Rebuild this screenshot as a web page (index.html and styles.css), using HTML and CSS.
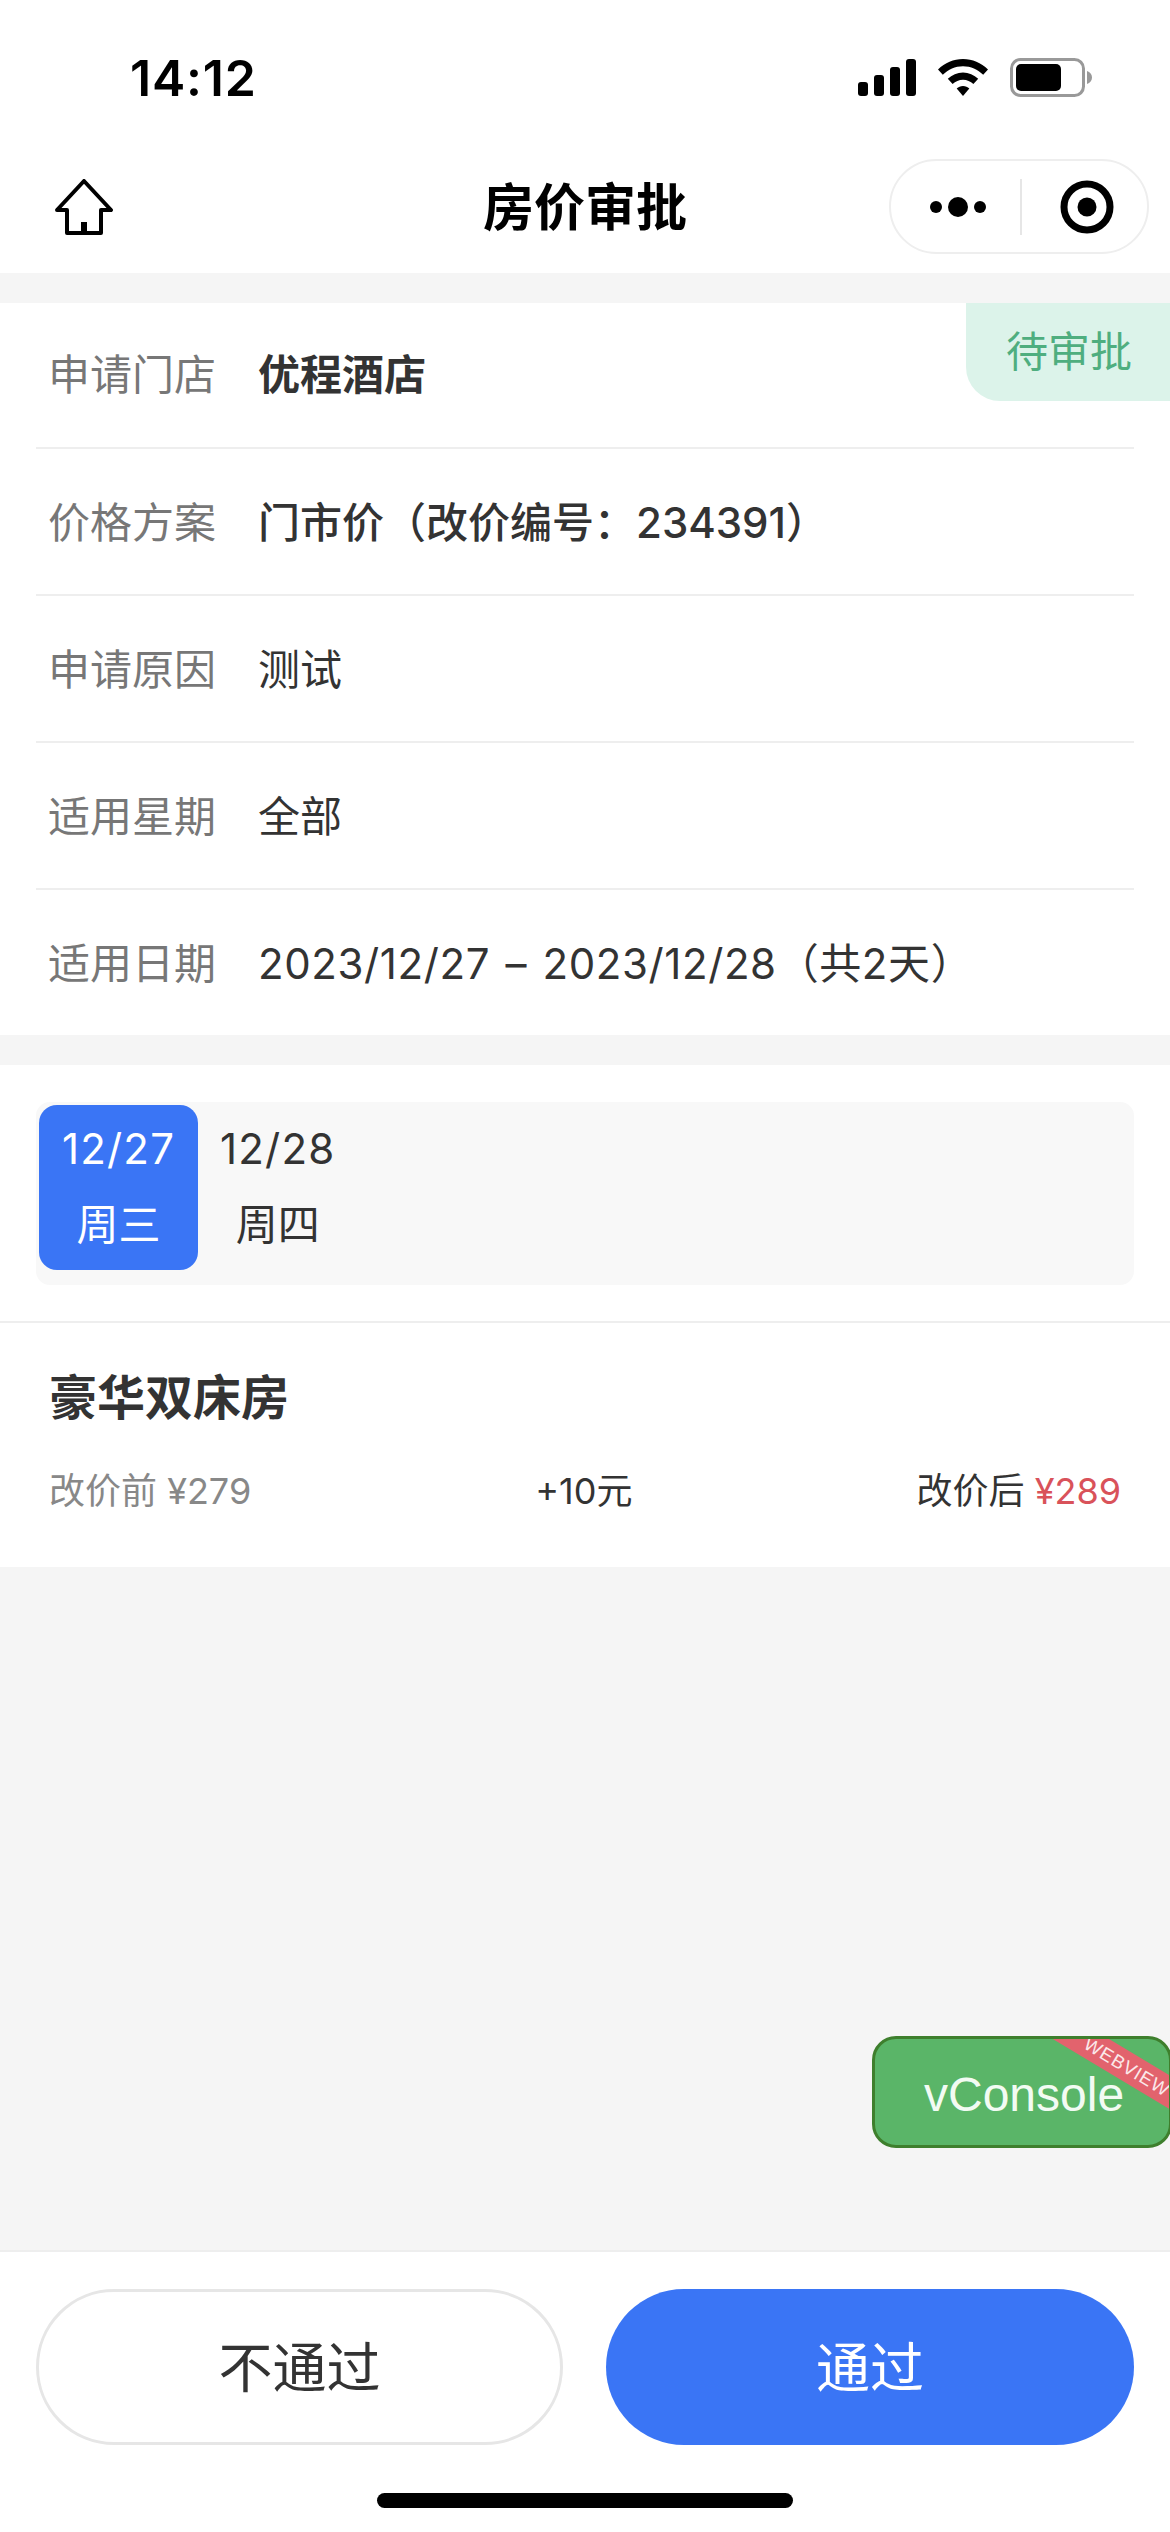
FILE: index.html
```html
<!DOCTYPE html>
<html lang="zh-CN">
<head>
<meta charset="utf-8">
<title>房价审批</title>
<link rel="stylesheet" href="styles.css">
</head>
<body>
<div class="app">
  <div class="status">
    <span class="time">14:12</span>
    <div class="status-icons">
      <svg class="ic-signal" viewBox="0 0 58 37"><rect x="0" y="23" width="10" height="14" rx="3"/><rect x="16" y="16" width="10" height="21" rx="3"/><rect x="32" y="8" width="10" height="29" rx="3"/><rect x="48" y="0" width="10" height="37" rx="3"/></svg>
      <svg class="ic-wifi" viewBox="0 0 50 37"><path d="M25 0C34.500 0 43 3.700 50 10.500L45.200 15.800C39.800 10.300 32.800 7.200 25 7.200C17.200 7.200 10.200 10.300 4.800 15.800L0 10.500C7 3.700 15.500 0 25 0Z"/><path d="M25 13.500C30.800 13.500 36 15.800 40.200 19.800L35.400 25C32.500 22.300 29 20.700 25 20.700C21 20.700 17.500 22.300 14.600 25L9.800 19.800C14 15.800 19.200 13.500 25 13.500Z"/><path d="M25 27C27.500 27 29.600 27.900 31.300 29.500L25 37L18.700 29.500C20.400 27.900 22.500 27 25 27Z"/></svg>
      <svg class="ic-batt" viewBox="0 0 82 39"><rect x="1.500" y="1.500" width="72" height="36" rx="9" fill="none" stroke="#999" stroke-width="3"/><rect x="6" y="6" width="45" height="27" rx="5"/><path d="M77 13C80 14 82 16.500 82 19.500C82 22.500 80 25 77 26Z" fill="#999"/></svg>
    </div>
  </div>
  <header class="nav">
    <svg class="ic-home" viewBox="0 0 58 56"><path d="M29 2L56 31H46V54H12V31H2Z M29 54V43" fill="none" stroke="#000" stroke-width="4" stroke-linejoin="round"/><rect x="26" y="43" width="6" height="11"/></svg>
    <h1 class="title">房价审批</h1>
    <div class="capsule">
      <svg class="ic-more" viewBox="0 0 60 22"><circle cx="6" cy="11" r="6"/><circle cx="28" cy="11" r="10"/><circle cx="50" cy="11" r="6"/></svg>
      <span class="capsule-line"></span>
      <svg class="ic-target" viewBox="0 0 54 54"><circle cx="27" cy="27" r="23" fill="none" stroke="#000" stroke-width="7"/><circle cx="27" cy="27" r="9.500"/></svg>
    </div>
  </header>
  <main class="content">
    <section class="info">
      <span class="tag">待审批</span>
      <div class="row"><span class="label">申请门店</span><span class="value strong">优程酒店</span></div>
      <div class="row"><span class="label">价格方案</span><span class="value medium">门市价（改价编号：234391）</span></div>
      <div class="row"><span class="label">申请原因</span><span class="value">测试</span></div>
      <div class="row"><span class="label">适用星期</span><span class="value">全部</span></div>
      <div class="row"><span class="label">适用日期</span><span class="value dates">2023/12/27 – 2023/12/28（共2天）</span></div>
    </section>
    <section class="prices">
      <div class="tabs-wrap">
        <div class="tabs">
          <div class="tab active"><span class="tab-date">12/27</span><span>周三</span></div>
          <div class="tab"><span class="tab-date">12/28</span><span>周四</span></div>
        </div>
      </div>
      <div class="room">
        <h2 class="room-name">豪华双床房</h2>
        <div class="room-row">
          <span class="before">改价前 ¥279</span>
          <span class="diff">+10元</span>
          <span class="after">改价后 <em class="price">¥289</em></span>
        </div>
      </div>
    </section>
  </main>
  <footer class="footer">
    <div class="actions">
      <button class="btn btn-reject"><span class="btn-text">不通过</span></button>
      <button class="btn btn-pass"><span class="btn-text">通过</span></button>
    </div>
    <div class="home-bar"></div>
  </footer>
  <div class="vconsole">vConsole<span class="ribbon">WEBVIEW</span></div>
</div>
</body>
</html>
```
FILE: styles.css
```css
* { box-sizing: border-box; }
html, body { margin: 0; padding: 0; }
body { font-family: Inter, "Noto Sans CJK SC", sans-serif; color: #333; }
.app { position: relative; width: 1170px; height: 2532px; overflow: hidden; display: flex; flex-direction: column; background: #f5f5f5; }

.status { height: 140px; flex: none; background: #fff; display: flex; justify-content: space-between; align-items: flex-start; padding: 0 78px 0 130px; }
.time { font-size: 50px; line-height: 50px; font-weight: 600; color: #000; margin-top: 53px; letter-spacing: .8px; }
.status-icons { display: flex; align-items: flex-start; margin-top: 58px; }
.ic-signal { width: 58px; height: 37px; margin: 1px 22px 0 0; }
.ic-wifi { width: 50px; height: 37px; margin: 1px 22px 0 0; }
.ic-batt { width: 82px; height: 39px; }

.nav { height: 133px; flex: none; background: #fff; position: relative; display: flex; align-items: flex-start; justify-content: space-between; padding: 19px 21px 0 55px; }
.ic-home { width: 58px; height: 56px; margin-top: 20px; }
.title { position: absolute; left: 0; right: 0; top: 33px; margin: 0; text-align: center; font-size: 51px; line-height: 70px; font-weight: 700; color: #000; }
.capsule { width: 260px; height: 95px; border: 2px solid #eee; border-radius: 48px; display: flex; align-items: center; padding-left: 39px; background: #fff; }
.ic-more { width: 60px; height: 22px; flex: none; }
.capsule-line { width: 2px; height: 56px; background: #e6e6e6; margin: 0 38px 0 30px; flex: none; }
.ic-target { width: 54px; height: 54px; flex: none; }

.content { flex: 1; padding-top: 30px; }
.info { position: relative; background: #fff; padding: 0 36px; }
.tag { position: absolute; top: 0; right: 0; width: 204px; height: 98px; background: #dcf3ea; color: #4fae7f; border-bottom-left-radius: 34px; font-size: 42px; line-height: 98px; text-align: center; padding-left: 2px; }
.row { height: 147px; display: flex; align-items: center; border-bottom: 2px solid #eee; padding: 0 0 4px 12px; font-size: 42px; }
.info .row:first-of-type { height: 146px; padding-bottom: 7px; }
.row:last-child { border-bottom: 0; height: 145px; }
.label { width: 210px; flex: none; color: #777; }
.value { color: #333; }
.strong { font-weight: 700; }
.medium { font-weight: 500; }
.dates { letter-spacing: .6px; word-spacing: 3px; }

.prices { margin-top: 30px; background: #fff; }
.tabs-wrap { padding: 37px 36px 36px; border-bottom: 2px solid #eee; }
.tabs { display: flex; align-items: flex-start; height: 183px; background: #f8f8f8; border-radius: 14px; padding: 3px; }
.tab { height: 165px; padding: 0 22px 2px; display: flex; flex-direction: column; align-items: center; justify-content: center; gap: 20px; font-size: 42px; line-height: 56px; color: #333; }
.tab-date { letter-spacing: 1.2px; }
.tab.active { background: #3a75f5; color: #fff; border-radius: 18px; width: 159px; padding: 0 0 2px; }
.room { padding: 40px 49px 0; height: 244px; }
.room-name { margin: 0; font-size: 48px; line-height: 70px; font-weight: 700; color: #333; }
.room-row { display: flex; justify-content: space-between; align-items: center; margin-top: 30px; font-size: 36px; line-height: 56px; color: #333; }
.before { color: #888; }
.price { font-style: normal; color: #d9525a; }

.footer { height: 282px; flex: none; background: #fff; border-top: 2px solid #eee; padding: 37px 36px 0; display: flex; flex-direction: column; align-items: center; }
.actions { width: 100%; display: flex; justify-content: space-between; }
.btn { width: 527px; height: 156px; border-radius: 78px; font-family: inherit; font-size: 54px; padding: 0 0 6px; }
.btn-reject { background: #fff; color: #333; border: 3px solid #e6e6e6; }
.btn-pass { background: #3a75f5; color: #fff; border: 0; width: 528px; }
.home-bar { width: 416px; height: 15px; border-radius: 8px; background: #000; margin-top: 48px; }

.vconsole { position: absolute; left: 872px; top: 2036px; width: 300px; height: 112px; background: #5ab568; border: 3px solid #3e7f2d; border-radius: 24px; overflow: hidden; color: #f2fbf3; font-family: "Liberation Sans", sans-serif; font-size: 48px; line-height: 111px; padding-left: 49px; }
.ribbon { position: absolute; left: 130px; top: 12px; width: 240px; height: 29px; background: #e2636d; color: #fbe9ea; transform: rotate(31deg); font-size: 18.500px; line-height: 29px; letter-spacing: 1px; text-align: center; padding-left: 5px; }
```
